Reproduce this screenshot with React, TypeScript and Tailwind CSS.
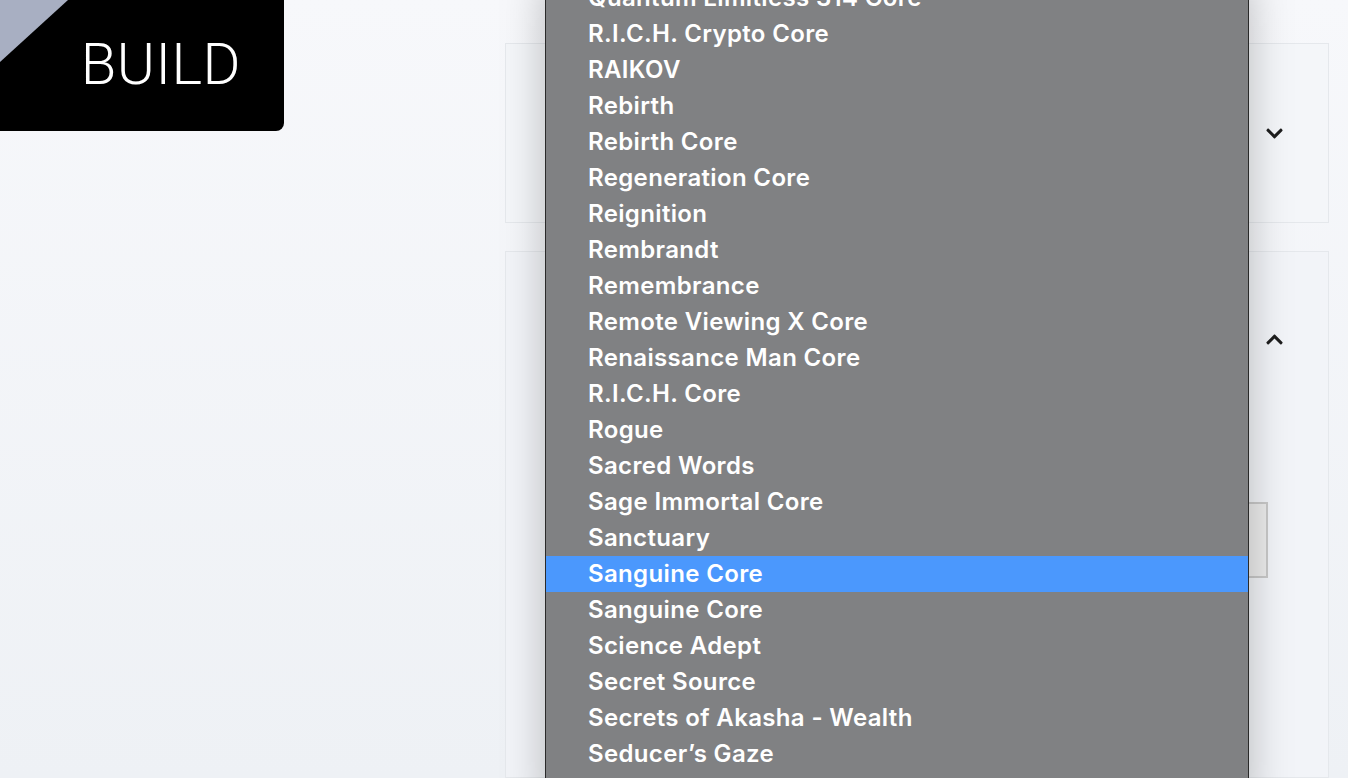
import { FaChevronDown, FaChevronUp } from 'react-icons/fa'

const options = [
  'Quantum Limitless 314 Core',
  'R.I.C.H. Crypto Core',
  'RAIKOV',
  'Rebirth',
  'Rebirth Core',
  'Regeneration Core',
  'Reignition',
  'Rembrandt',
  'Remembrance',
  'Remote Viewing X Core',
  'Renaissance Man Core',
  'R.I.C.H. Core',
  'Rogue',
  'Sacred Words',
  'Sage Immortal Core',
  'Sanctuary',
  'Sanguine Core',
  'Sanguine Core',
  'Science Adept',
  'Secret Source',
  'Secrets of Akasha - Wealth',
  'Seducer’s Gaze',
  'Seduction Core',
]

const selected = 16

export default function App() {
  return (
    <div className="relative h-[778px] w-full overflow-hidden bg-gradient-to-b from-[#f7f8fb] to-[#eef1f5] font-['Inter',sans-serif]">
      <div className="flex h-full">
        {/* Logo */}
        <div className="w-[505px] shrink-0">
          <div className="relative flex h-[131px] w-[284px] items-center justify-end overflow-hidden rounded-br-lg bg-black pb-[4px] pr-[43px]">
            <div className="absolute left-0 top-0 h-0 w-0 border-r-[68px] border-t-[62px] border-r-transparent border-t-[#a8afc2]" />
            <span className="font-['Roboto',sans-serif] text-[58px] font-light leading-none tracking-[0.5px] text-white">
              BUILD
            </span>
          </div>
        </div>

        {/* Cards */}
        <div className="flex flex-1 flex-col gap-[28px] pr-[19px] pt-[43px]">
          <div className="flex h-[180px] items-center justify-end border border-[#e5e8ec] bg-[#f4f6f9] pr-[44px]">
            <FaChevronDown className="h-[19px] w-[19px] text-[#1e1e1e]" />
          </div>
          <div className="flex flex-1 flex-col border border-[#e5e8ec] bg-[#f2f4f8] pr-[44px]">
            <div className="flex h-[174px] items-center justify-end">
              <FaChevronUp className="h-[19px] w-[19px] text-[#1e1e1e]" />
            </div>
            <div className="ml-[41px] mr-[16px] mt-[76px] h-[76px] border-2 border-[#c9c9c9] bg-[#ececec]" />
          </div>
        </div>
      </div>

      {/* Native select dropdown */}
      <div className="absolute left-[545px] top-[-20px] w-[704px] border-x border-[#2a2a2a] bg-[#808183] shadow-[0_0_40px_rgba(0,0,0,0.25)]">
        {options.map((label, i) => (
          <div
            key={i}
            className={
              'flex h-[36px] items-center pl-[42px] text-[24px] font-semibold leading-none tracking-[0.35px] text-white ' +
              (i === selected ? 'bg-[#4b98fd]' : '')
            }
          >
            {label}
          </div>
        ))}
      </div>
    </div>
  )
}
